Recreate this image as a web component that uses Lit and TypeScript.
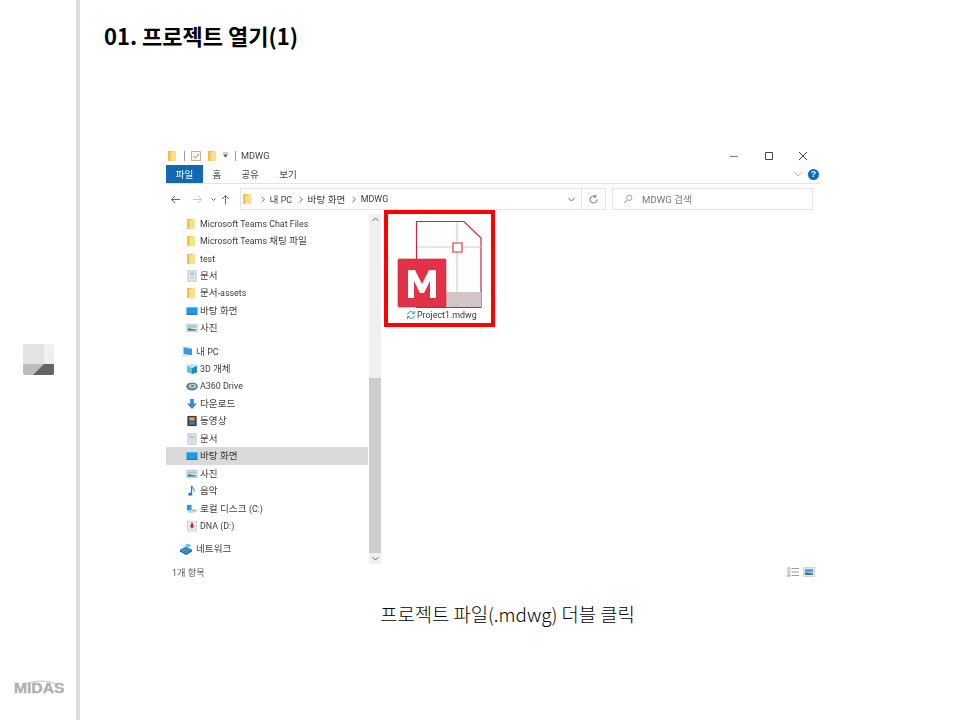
import { LitElement, html, css } from "lit";
import { customElement } from "lit/decorators.js";

const folder = html`<svg width="12" height="12" viewBox="0 0 12 12"><path d="M1 1h8v10H1z" fill="#fbe08c"/><path d="M1 1h2.500v10H1z" fill="#f3c04a"/><path d="M1 1h5v1H1z" fill="#f3c04a"/></svg>`;
const doc = html`<svg width="12" height="12" viewBox="0 0 12 12"><path d="M2 .8h8v10.400H2z" fill="#eef1f3" stroke="#a9b0b5" stroke-width=".8"/><path d="M3.500 2.500h5v3h-5z" fill="#9fd0ea"/><path d="M3.500 7h5M3.500 8.800h5" stroke="#b9bfc4" stroke-width=".8"/></svg>`;
const desktop = html`<svg width="13" height="12" viewBox="0 0 13 12"><path d="M.5 2h12v8H.5z" fill="#1e9be8"/><path d="M.5 9h12v1H.5z" fill="#12699f"/></svg>`;
const photo = html`<svg width="13" height="12" viewBox="0 0 13 12"><path d="M.8 2h11.400v8H.8z" fill="#e8edf0" stroke="#98a3aa" stroke-width=".6"/><path d="M2 3.200h9v2.600H2z" fill="#8ecbe8"/><path d="M2 8.600V6.200l3.500.7 5.500.7v1z" fill="#46705f"/></svg>`;
const pc = html`<svg width="15" height="12" viewBox="0 0 15 12"><path d="M0 9l6-.8 4 1.600-6 1.800z" fill="#dfe4e8"/><path d="M3.500 1l8.500 1.200v7L3.500 8z" fill="#2f9be0"/><path d="M3.500 1l8.500 1.200v1L3.500 2z" fill="#7cc6f0"/></svg>`;
const cube = html`<svg width="13" height="12" viewBox="0 0 13 12"><path d="M1 2.500L6.500 .5 12 2.500v7L6.500 11.500 1 9.500z" fill="#5cc6dc"/><path d="M6.500 4.800L12 2.500v7l-5.500 2z" fill="#1e8fb3"/><path d="M1 2.500l5.500 2.300L12 2.500 6.500.5z" fill="#b5ecf5"/></svg>`;
const drive = html`<svg width="13" height="12" viewBox="0 0 13 12"><ellipse cx="6.500" cy="6.500" rx="6.300" ry="4.400" fill="#5f8794"/><ellipse cx="7" cy="6" rx="3.800" ry="2.300" fill="#c8dbe2"/><ellipse cx="7" cy="6" rx="1.900" ry="1.100" fill="#4c7382"/></svg>`;
const down = html`<svg width="13" height="12" viewBox="0 0 13 12"><path d="M4.500 .5h4v5h3.500L6.500 11.500 1 5.500h3.500z" fill="#3d83d6"/></svg>`;
const film = html`<svg width="13" height="12" viewBox="0 0 13 12"><path d="M1.500.5h10v11h-10z" fill="#3b3f46"/><path d="M3.500 2h6v3.500h-6z" fill="#e2a43d"/><path d="M3.500 6.500h6v3.500h-6z" fill="#2f86c9"/></svg>`;
const music = html`<svg width="13" height="12" viewBox="0 0 13 12"><path d="M6 .5v8.500" stroke="#1c7fd0" stroke-width="1.400" fill="none"/><ellipse cx="4.600" cy="9.400" rx="2.200" ry="1.800" fill="#1c7fd0"/><path d="M6 .5c.5 2.300 3.500 2.800 3 6" stroke="#1c7fd0" stroke-width="1.100" fill="none"/></svg>`;
const local = html`<svg width="13" height="12" viewBox="0 0 13 12"><path d="M1 8l9.500-.5 2.500 1.500-9.500 1.800z" fill="#cfd5d9"/><path d="M1 1.500h5v6H1z" fill="#22a0dd"/><path d="M6 6.500h5V8H6z" fill="#aab3b9"/></svg>`;
const dna = html`<svg width="13" height="12" viewBox="0 0 13 12"><path d="M1.500.8h10v10.400h-10z" fill="#eceded" stroke="#b5b9bc" stroke-width=".6"/><path d="M5.500 2.500h2v3h1.800L6.500 9 3.700 5.500h1.800z" fill="#c8283a"/></svg>`;
const net = html`<svg width="15" height="12" viewBox="0 0 15 12"><path d="M0 6.500L6 3.500l6 3-6 3.500z" fill="#2f8fcf"/><path d="M0 6.500v2L6 12l6-3.500v-2L6 10z" fill="#1b6aa3"/><path d="M4.500 2.500L8 .5 11.500 2.500 8 4.500z" fill="#6fc0ea"/></svg>`;

type Row = { icon: unknown; label: string; indent?: boolean; selected?: boolean };
const groups: Row[][] = [
  [
    { icon: folder, label: "Microsoft Teams Chat Files" },
    { icon: folder, label: "Microsoft Teams 채팅 파일" },
    { icon: folder, label: "test" },
    { icon: doc, label: "문서" },
    { icon: folder, label: "문서-assets" },
    { icon: desktop, label: "바탕 화면" },
    { icon: photo, label: "사진" },
  ],
  [
    { icon: pc, label: "내 PC", indent: true },
    { icon: cube, label: "3D 개체" },
    { icon: drive, label: "A360 Drive" },
    { icon: down, label: "다운로드" },
    { icon: film, label: "동영상" },
    { icon: doc, label: "문서" },
    { icon: desktop, label: "바탕 화면", selected: true },
    { icon: photo, label: "사진" },
    { icon: music, label: "음악" },
    { icon: local, label: "로컬 디스크 (C:)" },
    { icon: dna, label: "DNA (D:)" },
  ],
  [{ icon: net, label: "네트워크", indent: true }],
];

/* Latin runs render smaller than Hangul, as Segoe beside Malgun Gothic does. */
const mixed = (label: string) =>
  label.split(/([\x21-\x7e][\x20-\x7e]*)/).map((part, i) =>
    i % 2 ? html`<span class="lat">${part}</span>` : part
  );

@customElement("app-root")
export class AppRoot extends LitElement {
  static styles = css`
    :host {
      display: block;
      width: 960px;
      height: 720px;
      background: #fff;
      font-family: "Noto Sans CJK KR", "Noto Sans", sans-serif;
      color: #000;
      overflow: hidden;
    }
    .page { display: flex; height: 720px; }
    .rail {
      box-sizing: border-box;
      width: 80px;
      flex: none;
      border-right: 4px solid #dedede;
      display: grid;
      grid-template-rows: 1fr auto 1fr;
      justify-items: start;
    }
    .mark {
      grid-row: 2;
      margin: 0 0 2px 23px;
      width: 31px;
      height: 31px;
      border-radius: 2px;
      display: block;
      filter: blur(0.4px);
    }
    .logo {
      grid-row: 3;
      align-self: end;
      margin: 0 0 24px 13px;
      width: 52px;
      height: 17px;
      position: relative;
      color: #b2b2b2;
      filter: blur(0.3px);
    }
    .logo span {
      position: absolute;
      left: 1px;
      bottom: 0;
      font: 700 14.500px/16px "Liberation Sans", sans-serif;
      -webkit-text-stroke: 0.5px #b2b2b2;
      transform: scaleX(1.08);
      transform-origin: left;
    }
    .logo svg { position: absolute; left: 0; top: 0; }
    .main { flex: 1; padding: 0 0 0 24px; display: flex; flex-direction: column; }
    h1 {
      margin: 19px 0 0;
      font-size: 22px;
      line-height: 32px;
      font-weight: 700;
    }
    .win {
      margin: 93px 0 0 62px;
      width: 654px;
      height: 441px;
      display: flex;
      flex-direction: column;
      font-family: Roboto, "Noto Sans CJK KR", sans-serif;
      font-size: 9.600px;
      color: #3c3c3c;
      filter: blur(0.25px);
    }
    .lat { font-size: 8.900px; }
    .title { box-sizing: border-box; height: 21px; padding: 2px 0 0 1px; display: flex; align-items: center; gap: 2px; }
    .sep { width: 1px; height: 10px; background: #9a9a9a; margin: 0 3px; }
    .sep.tail { margin: 0 0 0 3px; }
    .title .qa { display: flex; margin-left: 3px; }
    .mdwg { margin-left: 3px; font-size: 9.200px; color: #444; }
    .caps { margin-left: auto; display: flex; align-items: center; }
    .caps svg { display: block; width: 34px; height: 12px; }
    .tabs { height: 18px; display: flex; align-items: stretch; border-bottom: 1px solid #e3e3e3; }
    .tab { display: flex; align-items: center; justify-content: center; color: #444; }
    .tab.on { background: #1368b4; color: #fff; }
    .w37 { width: 37px; }
    .w28 { width: 28px; }
    .w38 { width: 38px; }
    .tabs .right { margin-left: auto; display: flex; align-items: center; gap: 4px; padding-right: 1px; }
    .help {
      width: 11px; height: 11px; border-radius: 50%;
      background: #0b6cc2; color: #fff;
      font: 700 9px/11px "Liberation Sans", sans-serif; text-align: center;
    }
    .addr { height: 30px; display: flex; align-items: center; }
    .navbtns { width: 74px; flex: none; display: flex; align-items: center; padding-left: 4px; box-sizing: border-box; gap: 6px; }
    .path {
      width: 341px; height: 22px; box-sizing: border-box;
      border: 1px solid #e4e4e4; border-right: none;
      display: flex; align-items: center; gap: 3.500px; padding-left: 1px;
    }
    .gt { width: 6px; height: 9px; margin-left: 2.500px; flex: none; display: block; }
    .path .caret { margin-left: auto; margin-right: 5px; display: flex; }
    .refresh {
      width: 25px; height: 22px; box-sizing: border-box;
      border: 1px solid #e4e4e4;
      display: flex; align-items: center; justify-content: center;
    }
    .search {
      margin-left: 6px; width: 201px; height: 22px; box-sizing: border-box;
      border: 1px solid #e4e4e4; display: flex; align-items: center; gap: 9px; padding-left: 10px;
      color: #777;
    }
    .body { flex: 1; display: flex; min-height: 0; }
    .nav { width: 203px; flex: none; display: flex; flex-direction: column; gap: 5.800px; padding-top: 1px; }
    .group { display: flex; flex-direction: column; }
    .row { height: 17.450px; display: flex; align-items: center; padding-left: 20px; gap: 2px; box-sizing: border-box; white-space: nowrap; line-height: 12px; }
    .row.indent { padding-left: 14px; gap: 1px; }
    .row.sel { background: #d9d9d9; color: #333; margin-right: 1px; }
    .row .ic { width: 12px; height: 12px; flex: none; display: flex; align-items: center; }
    .row:not(.indent) .ic svg { width: 12px; height: 12px; }
    .row.indent .ic { width: 15px; }
    .scroll { width: 12px; flex: none; height: 350px; background: #f0f0f0; display: flex; flex-direction: column; }
    .sb { height: 11px; display: flex; align-items: center; justify-content: center; }
    .track { flex: 1; display: flex; flex-direction: column; justify-content: flex-end; }
    .thumb { height: 175px; background: #cdcdcd; }
    .content { flex: 1; }
    .pick {
      box-sizing: border-box;
      margin: -4px 0 0 3px;
      width: 111px;
      height: 117px;
      border: 4px solid #fe0000;
      display: flex; flex-direction: column; align-items: flex-start;
    }
    .pick svg.file { display: block; margin: 6px 0 0 9px; flex: none; }
    .fname { display: flex; align-items: center; gap: 1px; line-height: 12px; color: #3a3a3a; margin: 0 0 0 18px; }
    .status { height: 27px; display: flex; align-items: center; padding-left: 6px; font-size: 9.200px; color: #555; }
    .views { margin-left: auto; margin-right: 5px; display: flex; align-items: center; gap: 4px; }
    .caption { margin: 14px 0 0; width: 807px; text-align: center; font-size: 18.800px; line-height: 30px; font-weight: 300; color: #000; }
  `;

  private chevron(d: string) {
    return html`<svg width="9" height="9" viewBox="0 0 9 9"><path d="${d}" fill="none" stroke="#666" stroke-width="1"/></svg>`;
  }

  private gt() {
    return html`<svg class="gt" viewBox="0 0 6 9"><path d="M1.500 2l3 2.500-3 2.500" fill="none" stroke="#666" stroke-width=".9"/></svg>`;
  }

  render() {
    return html`
      <div class="page">
        <aside class="rail">
          <svg class="mark" viewBox="0 0 31 31">
            <path d="M0 0h21v20H0z" fill="#e3e3e5"/>
            <path d="M21 0h10v20H21z" fill="#efeff1"/>
            <path d="M0 20h31v11H0z" fill="#bcbcbc"/>
            <path d="M10 31l11-11h10v11z" fill="#646464"/>
          </svg>
          <div class="logo">
            <svg width="52" height="8" viewBox="0 0 52 8"><path d="M12 5Q30 -1 43 5" fill="none" stroke="#c4c4c4" stroke-width="1.200"/></svg>
            <span>MIDAS</span>
          </div>
        </aside>
        <main class="main">
          <h1>01. 프로젝트 열기(1)</h1>
          <section class="win">
            <div class="title">
              ${folder}<span class="sep"></span>
              <svg width="12" height="12" viewBox="0 0 12 12"><path d="M1.500 1.500h9v9h-9z" fill="#fafafa" stroke="#a0a0a0" stroke-width=".8"/><path d="M3.500 6l2 2 3.500-4" fill="none" stroke="#e0703a" stroke-width="1"/></svg>
              <span class="qa">${folder}</span>
              <svg width="9" height="9" viewBox="0 0 9 9"><path d="M2 3.500h5L4.500 6.500z" fill="#555"/><path d="M2 2h5" stroke="#555" stroke-width=".6"/></svg>
              <span class="sep tail"></span>
              <span class="mdwg">MDWG</span>
              <div class="caps">
                <svg viewBox="0 0 34 12"><path d="M12 6.500h8" stroke="#777" stroke-width="1"/></svg>
                <svg viewBox="0 0 34 12"><path d="M13.500 2.500h7v7h-7z" fill="none" stroke="#444" stroke-width="1"/></svg>
                <svg viewBox="0 0 34 12"><path d="M13 2l8 8M21 2l-8 8" stroke="#444" stroke-width="1"/></svg>
              </div>
            </div>
            <div class="tabs">
              <div class="tab on w37">파일</div><div class="tab w28">홈</div><div class="tab w38">공유</div><div class="tab w38">보기</div>
              <div class="right">
                <svg width="12" height="8" viewBox="0 0 12 8"><path d="M2 2l4 4 4-4" fill="none" stroke="#bbb" stroke-width="1"/></svg>
                <div class="help">?</div>
              </div>
            </div>
            <div class="addr">
              <div class="navbtns">
                <svg width="11" height="9" viewBox="0 0 11 9"><path d="M10 4.500H1.500M5 1L1.500 4.500 5 8" fill="none" stroke="#666" stroke-width="1"/></svg>
                <svg width="11" height="9" viewBox="0 0 11 9" style="margin-left:5px"><path d="M1 4.500h8.500M6 1l3.500 3.500L6 8" fill="none" stroke="#c8c8c8" stroke-width="1"/></svg>
                ${this.chevron("M2.500 3.500L4.500 5.500 6.500 3.500")}
                <svg width="9" height="11" viewBox="0 0 9 11" style="margin-left:-3px"><path d="M4.500 10.500V1.500M1 5l3.500-3.500L8 5" fill="none" stroke="#666" stroke-width="1"/></svg>
              </div>
              <div class="path">
                ${folder}
                ${this.gt()}<span>${mixed("내 PC")}</span>
                ${this.gt()}<span>바탕 화면</span>
                ${this.gt()}<span class="lat">MDWG</span>
                <span class="caret">${this.chevron("M1.500 3L4.500 6 7.500 3")}</span>
              </div>
              <div class="refresh">
                <svg width="11" height="11" viewBox="0 0 11 11"><path d="M9 5.500A3.500 3.500 0 1 1 7.500 2.600M7.800 .8v2.200H5.600" fill="none" stroke="#666" stroke-width="1"/></svg>
              </div>
              <div class="search">
                <svg width="10" height="10" viewBox="0 0 10 10"><circle cx="6.200" cy="3.800" r="2.700" fill="none" stroke="#999" stroke-width=".9"/><path d="M4.200 5.800L1 9" stroke="#999" stroke-width="1"/></svg>
                <span>MDWG 검색</span>
              </div>
            </div>
            <div class="body">
              <nav class="nav">
                ${groups.map(g => html`<div class="group">
                  ${g.map(r => html`<div class="row ${r.indent ? "indent" : ""} ${r.selected ? "sel" : ""}"><span class="ic">${r.icon}</span><span>${mixed(r.label)}</span></div>`)}
                </div>`)}
              </nav>
              <div class="scroll">
                <div class="sb">${this.chevron("M1.500 6L4.500 3 7.500 6")}</div>
                <div class="track"><div class="thumb"></div></div>
                <div class="sb">${this.chevron("M1.500 3L4.500 6 7.500 3")}</div>
              </div>
              <div class="content">
                <div class="pick">
                  <svg class="file" width="86" height="89" viewBox="0 0 86 89">
                    <path d="M19.500 1.500H67L84 18V87.500H19.500z" fill="#fffefe" stroke="#c9283e" stroke-width="1.200"/>
                    <path d="M20 27h64M60 2v70" stroke="#dcc8c8" stroke-width="1.200" fill="none"/>
                    <path d="M56 23h9v9h-9z" fill="#fff" stroke="#e0747f" stroke-width="1.700"/>
                    <path d="M49 72h35v15H49z" fill="#d0c6c8"/>
                    <rect x="1" y="39" width="48" height="48" rx="1" fill="#e23247" stroke="#c9283e" stroke-width=".6"/>
                    <path d="M11 78V50h7L25 64 32 50H39V78H33V61L27 73H23L17 61V78z" fill="#fff"/>
                  </svg>
                  <div class="fname">
                    <svg width="10" height="10" viewBox="0 0 10 10"><path d="M1.500 4.500A3.500 3.500 0 0 1 7.800 3M8.500 5.500A3.500 3.500 0 0 1 2.200 7" fill="none" stroke="#3a8fd8" stroke-width="1"/><path d="M8.500 .8V3.500H6M1.500 9.200V6.500H4" fill="none" stroke="#3a8fd8" stroke-width=".9"/></svg>
                    <span class="lat">Project1.mdwg</span>
                  </div>
                </div>
              </div>
            </div>
            <div class="status">
              <span>${mixed("1")}개 항목</span>
              <div class="views">
                <svg width="12" height="10" viewBox="0 0 12 10"><path d="M0 0h3.500v10H0z" fill="#d4d4d4"/><path d="M4.500 1.500H12M4.500 5H12M4.500 8.500H12" stroke="#999" stroke-width="1"/><path d="M1 8h1.500v1.200H1z" fill="#e58080"/></svg>
                <svg width="12" height="10" viewBox="0 0 12 10"><path d="M.5.500h11v9H.5z" fill="#e6eaec" stroke="#b7bec2" stroke-width=".6"/><path d="M2 2h8v3.500H2z" fill="#5aa6de"/><path d="M2 8V5.500l4 .5 4 .500V8z" fill="#46705f"/></svg>
              </div>
            </div>
          </section>
          <p class="caption">프로젝트 파일(.mdwg) 더블 클릭</p>
        </main>
      </div>
    `;
  }
}
